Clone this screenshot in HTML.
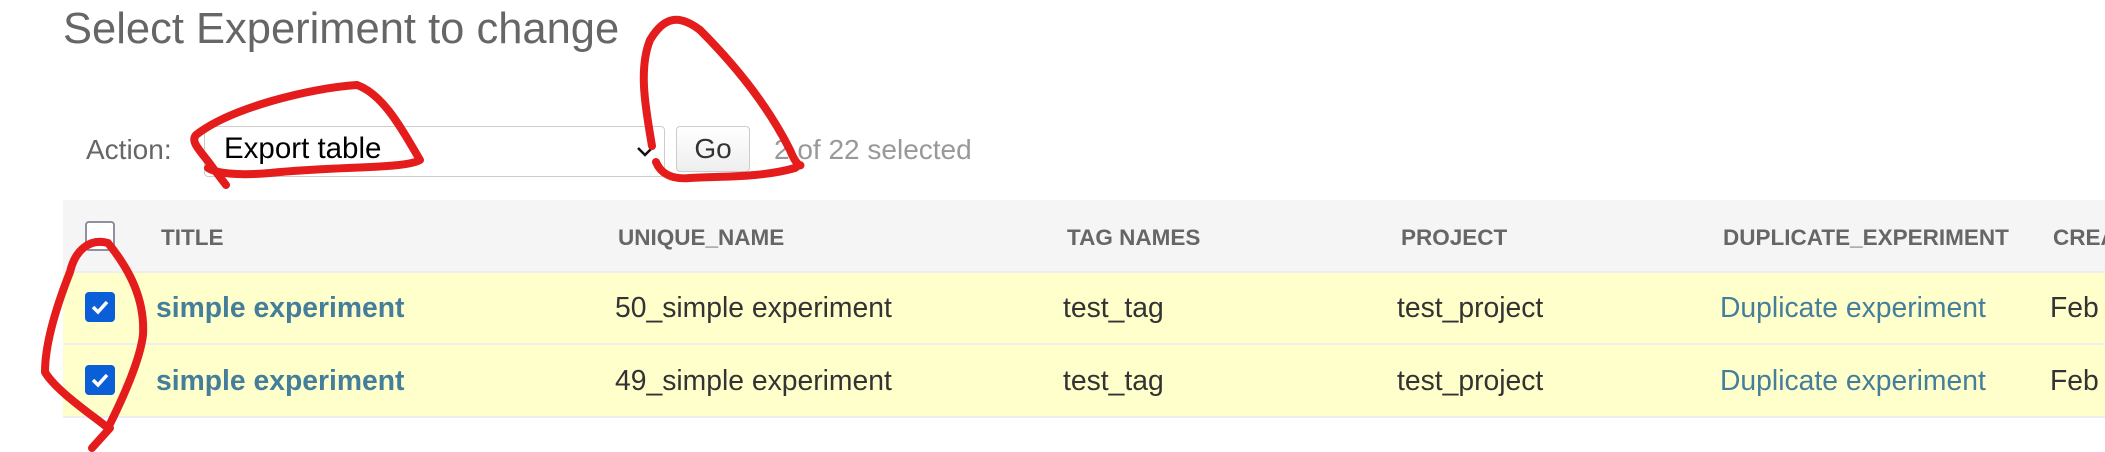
<!DOCTYPE html>
<html><head><style>
body{margin:0;width:2105px;height:452px;background:#fff;position:relative;overflow:hidden;font-family:"Liberation Sans",sans-serif}
.a{position:absolute;white-space:nowrap}
.h{font-weight:bold;font-size:22.5px;color:#666;top:225px}
.c{font-size:28.3px;color:#333}
.l{color:#447e9b}
.cb{position:absolute;left:85px;width:30px;height:30px;border-radius:4px;background:#0a5fd8}
</style></head><body>
<div class="a" style="left:63px;top:5px;font-size:43.5px;color:#666;font-weight:300">Select Experiment to change</div>
<div class="a" style="left:86px;top:134px;font-size:28px;color:#666">Action:</div>
<div class="a" style="left:204px;top:126px;width:459px;height:49px;border:1px solid #ccc;border-radius:4px"></div>
<div class="a" style="left:224px;top:132px;font-size:29.5px;color:#000">Export table</div>
<svg class="a" style="left:636px;top:146px" width="18" height="12"><path d="M2,2 L9,9 L16,2" fill="none" stroke="#111" stroke-width="2.5"/></svg>
<div class="a" style="left:676px;top:126px;width:72px;height:44px;border:1px solid #ccc;border-radius:4px;background:linear-gradient(#fff,#eee);font-size:28px;color:#333;text-align:center;line-height:44px">Go</div>
<div class="a" style="left:774px;top:134px;font-size:28px;color:#999">2 of 22 selected</div>
<div class="a" style="left:63px;top:200px;width:2042px;height:71px;background:#f5f5f5"></div>
<div class="a" style="left:63px;top:271px;width:2042px;height:2px;background:#eee"></div>
<div class="a" style="left:63px;top:273px;width:2042px;height:70px;background:#ffffcc"></div>
<div class="a" style="left:63px;top:343px;width:2042px;height:2px;background:#eee"></div>
<div class="a" style="left:63px;top:345px;width:2042px;height:71px;background:#ffffcc"></div>
<div class="a" style="left:63px;top:416px;width:2042px;height:2px;background:#eee"></div>
<div class="a" style="left:85px;top:221px;width:26px;height:26px;border:2px solid #8f8f9d;border-radius:4px;background:#fff"></div>
<div class="h a" style="left:161px">TITLE</div>
<div class="h a" style="left:618px">UNIQUE_NAME</div>
<div class="h a" style="left:1067px">TAG NAMES</div>
<div class="h a" style="left:1401px">PROJECT</div>
<div class="h a" style="left:1723px">DUPLICATE_EXPERIMENT</div>
<div class="h a" style="left:2053px">CREATED</div>
<div class="cb" style="top:292px"><svg width="30" height="30"><path d="M8,15 L13,20 L22,10" fill="none" stroke="#fff" stroke-width="3.5"/></svg></div>
<div class="cb" style="top:365px"><svg width="30" height="30"><path d="M8,15 L13,20 L22,10" fill="none" stroke="#fff" stroke-width="3.5"/></svg></div>
<div class="a c l" style="left:156px;top:291px;font-weight:bold">simple experiment</div>
<div class="a c l" style="left:156px;top:364px;font-weight:bold">simple experiment</div>
<div class="a c" style="left:615px;top:291px">50_simple experiment</div>
<div class="a c" style="left:615px;top:364px">49_simple experiment</div>
<div class="a c" style="left:1063px;top:291px">test_tag</div>
<div class="a c" style="left:1063px;top:364px">test_tag</div>
<div class="a c" style="left:1397px;top:291px">test_project</div>
<div class="a c" style="left:1397px;top:364px">test_project</div>
<div class="a c l" style="left:1720px;top:291px">Duplicate experiment</div>
<div class="a c l" style="left:1720px;top:364px">Duplicate experiment</div>
<div class="a c" style="left:2050px;top:291px">Feb</div>
<div class="a c" style="left:2050px;top:364px">Feb</div>
<svg class="a" style="left:0;top:0" width="2105" height="452">
<g fill="none" stroke="#e41c1c" stroke-width="8" stroke-linecap="round" stroke-linejoin="round">
<path d="M226,185 L213,168 C200,150 190,142 196,135 C230,108 310,88 357,85 C385,95 405,135 420,160 C405,169 340,166 270,173 C236,176 216,173 208,168"/>
<path d="M652,146 C646,110 638,70 650,40 C665,15 680,15 700,30 C740,70 770,110 790,150 C800,175 805,160 795,168 C760,178 720,176 690,178 C670,180 660,172 656,162"/>
<path d="M108,243 C90,238 75,250 70,272 C55,310 45,345 45,372 C55,390 92,415 108,428 C122,400 140,360 143,335 C145,300 130,270 108,243 M110,428 L92,448"/>
</g></svg>
</body></html>
